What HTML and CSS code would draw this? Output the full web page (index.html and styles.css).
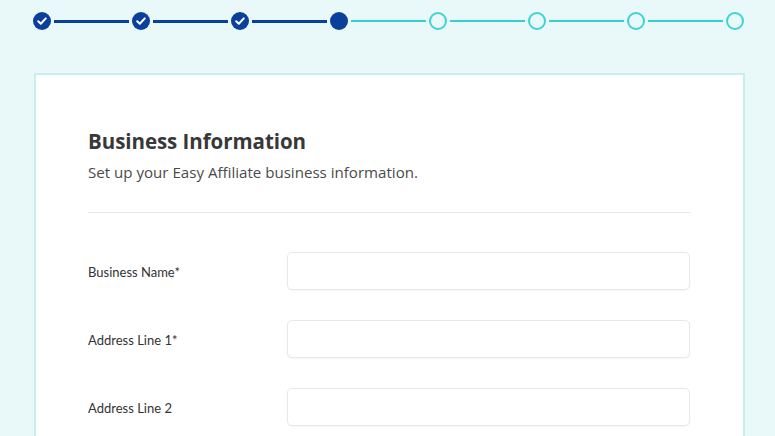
FILE: index.html
```html
<!DOCTYPE html>
<html>
<head>
<meta charset="utf-8">
<link rel="stylesheet" href="styles.css">
</head>
<body>
<div class="page">
  <div class="stepper">
    <span class="step done"><svg viewBox="0 0 18 18" width="18" height="18"><circle cx="9" cy="9" r="9" fill="#0b3f9c"/><path d="M5.2 9.3 L7.8 11.8 L12.8 6.4" fill="none" stroke="#fff" stroke-width="2" stroke-linecap="round" stroke-linejoin="round"/></svg></span>
    <span class="line done"></span>
    <span class="step done"><svg viewBox="0 0 18 18" width="18" height="18"><circle cx="9" cy="9" r="9" fill="#0b3f9c"/><path d="M5.2 9.3 L7.8 11.8 L12.8 6.4" fill="none" stroke="#fff" stroke-width="2" stroke-linecap="round" stroke-linejoin="round"/></svg></span>
    <span class="line done"></span>
    <span class="step done"><svg viewBox="0 0 18 18" width="18" height="18"><circle cx="9" cy="9" r="9" fill="#0b3f9c"/><path d="M5.2 9.3 L7.8 11.8 L12.8 6.4" fill="none" stroke="#fff" stroke-width="2" stroke-linecap="round" stroke-linejoin="round"/></svg></span>
    <span class="line done"></span>
    <span class="step current"></span>
    <span class="line"></span>
    <span class="step todo"></span>
    <span class="line"></span>
    <span class="step todo"></span>
    <span class="line"></span>
    <span class="step todo"></span>
    <span class="line"></span>
    <span class="step todo"></span>
  </div>

  <div class="card">
    <h1 class="title">Business Information</h1>
    <p class="subtitle">Set up your Easy Affiliate business information.</p>
    <hr class="divider">
    <div class="form">
      <div class="row">
        <label class="label">Business Name*</label>
        <div class="input"></div>
      </div>
      <div class="row">
        <label class="label">Address Line 1*</label>
        <div class="input"></div>
      </div>
      <div class="row">
        <label class="label">Address Line 2</label>
        <div class="input"></div>
      </div>
    </div>
  </div>
</div>
</body>
</html>
```
FILE: styles.css
```css
html, body {
  margin: 0;
  padding: 0;
  background: #e9f8f8;
  overflow: hidden;
}
.page {
  padding: 12px 30px 0 33px;
}
.stepper {
  display: flex;
  align-items: center;
  height: 18px;
  width: 711px;
}
.step {
  width: 18px;
  height: 18px;
  flex: none;
  box-sizing: border-box;
  border-radius: 50%;
}
.step svg { display: block; }
.step.current { background: #0b3f9c; }
.step.todo { border: 2px solid #40d3d3; background: transparent; }
.line {
  flex: 1;
  height: 2px;
  margin: 0 3px;
  background: #35d0cf;
}
.line.done {
  height: 3px;
  background: #0b3f9c;
}
.card {
  margin-top: 43px;
  width: 711px;
  box-sizing: border-box;
  margin-left: 1px;
  background: #fff;
  border: 2px solid #c8eeee;
  padding: 52px 53px 0 52px;
  height: 380px;
}
.title {
  margin: 0;
  font-family: "Open Sans", "Noto Sans", sans-serif;
  font-weight: 700;
  font-size: 20.5px;
  line-height: 28px;
  color: #383838;
  letter-spacing: -0.05px;
}
.subtitle {
  margin: 6px 0 0;
  font-family: "Open Sans", "Noto Sans", sans-serif;
  font-size: 15.1px;
  line-height: 22px;
  color: #4a4a4a;
}
.divider {
  margin: 29px 0 0;
  border: 0;
  border-top: 1px solid #e6e6e6;
}
.form {
  padding-top: 39px;
  display: flex;
  flex-direction: column;
  gap: 30px;
}
.row {
  display: flex;
  align-items: center;
}
.label {
  width: 199px;
  flex: none;
  font-family: "Lato", sans-serif;
  font-size: 13px;
  line-height: 18px;
  padding-top: 2px;
  color: #333;
}
.input {
  flex: 1;
  height: 38px;
  box-sizing: border-box;
  border: 1px solid #e8e8e8;
  border-radius: 5px;
  background: #fff;
  box-shadow: 0 1px 2px rgba(0,0,0,0.04);
}
```
